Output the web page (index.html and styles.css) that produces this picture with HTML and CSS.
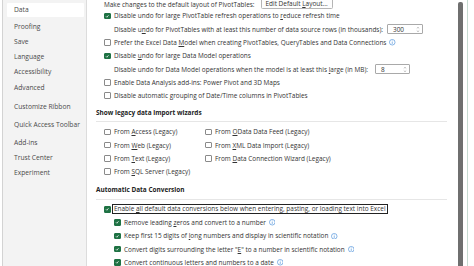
FILE: index.html
```html
<!DOCTYPE html>
<html>
<head>
<meta charset="utf-8">
<link rel="stylesheet" href="styles.css">
</head>
<body>
<div class="app">
  <div class="gutter"></div>
  <nav class="sidebar">
    <div class="nav-item selected">Data</div>
    <div class="nav-item">Proofing</div>
    <div class="nav-item">Save</div>
    <div class="nav-item">Language</div>
    <div class="nav-item">Accessibility</div>
    <div class="nav-item">Advanced</div>
    <div class="nav-item group-start">Customize Ribbon</div>
    <div class="nav-item tall">Quick Access Toolbar</div>
    <div class="nav-item group-start2">Add-ins</div>
    <div class="nav-item">Trust Center</div>
    <div class="nav-item">Experiment</div>
  </nav>
  <main class="main">
    <div class="top-row">
      <span class="top-text">Make changes to the default layout of PivotTables:</span>
      <button class="btn"><span>Edit Default <u>L</u>ayout...</span></button>
    </div>
    <div class="row ind1">
      <span class="cb on"><svg viewBox="0 0 6 6"><path d="M1.3 3.1 L2.5 4.3 L4.7 1.7"/></svg></span>
      <span>Disable undo for large PivotTable refresh operations to <u>r</u>educe refresh time</span>
    </div>
    <div class="row ind2">
      <span>Disable u<u>n</u>do for PivotTables with at least this number of data source rows (in thousands):</span>
      <span class="num w36">300<svg class="spin" viewBox="0 0 5 8"><path d="M1 2.6 L2.5 1.2 L4 2.6 M1 5.4 L2.5 6.8 L4 5.4"/></svg></span>
    </div>
    <div class="row ind1">
      <span class="cb"></span>
      <span>Prefer the Excel Data <u>M</u>odel when creating PivotTables, QueryTables and Data Connections</span>
      <svg class="info" viewBox="0 0 7 7"><circle cx="3.5" cy="3.5" r="3"/><circle class="dot" cx="3.5" cy="2.1" r="0.45"/><path d="M3.5 3.1 V5.3"/></svg>
    </div>
    <div class="row ind1">
      <span class="cb on"><svg viewBox="0 0 6 6"><path d="M1.3 3.1 L2.5 4.3 L4.7 1.7"/></svg></span>
      <span>Disable <u>u</u>ndo for large Data Model operations</span>
    </div>
    <div class="row ind2">
      <span>Disable undo for Data Model operations when the model is at least this <u>l</u>arge (in MB):</span>
      <span class="num w35">8<svg class="spin" viewBox="0 0 5 8"><path d="M1 2.6 L2.5 1.2 L4 2.6 M1 5.4 L2.5 6.8 L4 5.4"/></svg></span>
    </div>
    <div class="row ind1">
      <span class="cb"></span>
      <span>Enable Data Analysis add-ins: Power Pivot and 3D Maps</span>
    </div>
    <div class="row ind1">
      <span class="cb"></span>
      <span>Disable automatic grouping of Date/Time columns in PivotTables</span>
    </div>

    <div class="section-title">Show legacy data import wizards</div>
    <div class="legacy">
      <div class="row"><span class="cb"></span><span>From <u>A</u>ccess (Legacy)</span></div>
      <div class="row"><span class="cb"></span><span>From <u>O</u>Data Data Feed (Legacy)</span></div>
      <div class="row"><span class="cb"></span><span>From <u>W</u>eb (Legacy)</span></div>
      <div class="row"><span class="cb"></span><span>From <u>X</u>ML Data Import (Legacy)</span></div>
      <div class="row"><span class="cb"></span><span>From <u>T</u>ext (Legacy)</span></div>
      <div class="row"><span class="cb"></span><span>From <u>D</u>ata Connection Wizard (Legacy)</span></div>
      <div class="row"><span class="cb"></span><span>From <u>S</u>QL Server (Legacy)</span></div>
    </div>

    <div class="section-title second">Automatic Data Conversion</div>
    <div class="row ind1">
      <span class="cb on"><svg viewBox="0 0 6 6"><path d="M1.3 3.1 L2.5 4.3 L4.7 1.7"/></svg></span>
      <span class="focus">Enable <u>a</u>ll default data conversions below when entering, pasting, or loading text into Excel</span>
    </div>
    <div class="row ind3">
      <span class="cb on"><svg viewBox="0 0 6 6"><path d="M1.3 3.1 L2.5 4.3 L4.7 1.7"/></svg></span>
      <span>Remove leading <u>z</u>eros and convert to a number</span>
      <svg class="info" viewBox="0 0 7 7"><circle cx="3.5" cy="3.5" r="3"/><circle class="dot" cx="3.5" cy="2.1" r="0.45"/><path d="M3.5 3.1 V5.3"/></svg>
    </div>
    <div class="row ind3">
      <span class="cb on"><svg viewBox="0 0 6 6"><path d="M1.3 3.1 L2.5 4.3 L4.7 1.7"/></svg></span>
      <span>Keep first 15 digits of <u>l</u>ong numbers and display in scientific notation</span>
      <svg class="info" viewBox="0 0 7 7"><circle cx="3.5" cy="3.5" r="3"/><circle class="dot" cx="3.5" cy="2.1" r="0.45"/><path d="M3.5 3.1 V5.3"/></svg>
    </div>
    <div class="row ind3">
      <span class="cb on"><svg viewBox="0 0 6 6"><path d="M1.3 3.1 L2.5 4.3 L4.7 1.7"/></svg></span>
      <span>Convert digits surrounding the letter "<u>E</u>" to a number in scientific notation</span>
      <svg class="info" viewBox="0 0 7 7"><circle cx="3.5" cy="3.5" r="3"/><circle class="dot" cx="3.5" cy="2.1" r="0.45"/><path d="M3.5 3.1 V5.3"/></svg>
    </div>
    <div class="row ind3">
      <span class="cb on"><svg viewBox="0 0 6 6"><path d="M1.3 3.1 L2.5 4.3 L4.7 1.7"/></svg></span>
      <span>Convert <u>c</u>ontinuous letters and numbers to a date</span>
      <svg class="info" viewBox="0 0 7 7"><circle cx="3.5" cy="3.5" r="3"/><circle class="dot" cx="3.5" cy="2.1" r="0.45"/><path d="M3.5 3.1 V5.3"/></svg>
    </div>
  </main>
  <div class="scroll-col"><div class="thumb"></div></div>
  <div class="frame-gap"></div>
  <div class="frame-line"></div>
  <div class="frame-rest"></div>
</div>
</body>
</html>
```
FILE: styles.css
```css
* { box-sizing: border-box; }
html, body { margin: 0; padding: 0; background: #fff; }
body {
  width: 474px;
  height: 266px;
  overflow: hidden;
  font-family: "Open Sans", "Noto Sans", sans-serif;
  font-size: 6.45px;
  color: #333;
}
u { text-decoration-thickness: 0.6px; text-underline-offset: 1px; }
.app { display: flex; height: 266px; overflow: hidden; }
.gutter { width: 2px; flex: none; }
.sidebar {
  width: 85px;
  flex: none;
  background: #f3f3f3;
  border-left: 1px solid #d3d3d3;
  border-right: 1px solid #dcdcdc;
  padding: 3px 2px 0 4px;
  color: #4a4a4a;
  font-size: 6.7px;
}
.nav-item {
  height: 15.3px;
  line-height: 15px;
  padding-left: 7px;
  white-space: nowrap;
}
.nav-item.selected { background: #fff; height: 14px; line-height: 14px; margin-bottom: 1.6px; border-radius: 1px; }
.nav-item.group-start { margin-top: 3.7px; }
.nav-item.tall { margin-top: 2.7px; }
.nav-item.group-start2 { margin-top: 2.7px; }

.main {
  flex: 1;
  min-width: 0;
  padding: 0 11px 0 9px;
  white-space: nowrap;
}
.top-row {
  height: 9.3px;
  display: flex;
  align-items: flex-end;
  padding-left: 8px;
  gap: 6px;
}
.top-text { align-self: center; line-height: 8px; }
.btn {
  font: inherit;
  color: #333;
  height: 12px;
  padding: 0 4px 1px;
  border: 1px solid #b5b5b5;
  border-radius: 1.5px;
  background: #fdfdfd;
  display: flex;
  align-items: flex-end;
}
.btn span { line-height: 7px; }
.row {
  height: 13.3px;
  display: flex;
  align-items: center;
}
.ind1 { padding-left: 8px; }
.ind2 { padding-left: 18px; }
.ind3 { padding-left: 18px; }
.cb {
  width: 6.5px;
  height: 6.5px;
  flex: none;
  border: 0.8px solid #8a8a8a;
  border-radius: 1px;
  background: #fff;
  margin-right: 3.5px;
  display: flex;
}
.cb.on { background: #1f7244; border-color: #1f7244; }
.cb svg { width: 100%; height: 100%; fill: none; stroke: #fff; stroke-width: 1; }
.num {
  display: flex;
  align-items: center;
  justify-content: space-between;
  height: 10.5px;
  margin-left: 4px;
  padding: 0 2px 0 5px;
  border: 0.8px solid #a9a9a9;
  border-radius: 1px;
}
.w36 { width: 36px; }
.w35 { width: 35px; margin-left: 7px; }
.spin { width: 4px; height: 7px; fill: none; stroke: #777; stroke-width: 0.6; }
.info { width: 6.5px; height: 6.5px; margin-left: 3px; fill: none; stroke: #2b7cd3; stroke-width: 0.6; }
.info .dot { fill: #2b7cd3; stroke: none; }
.section-title {
  font-weight: 700;
  color: #222;
  margin-top: 5px;
  border-bottom: 1px solid #e6e6e6;
  margin-bottom: 3.5px;
  height: 14.5px;
  line-height: 12px;
}
.section-title.second { margin-top: 4.5px; height: 17px; line-height: 14px; margin-bottom: 3px; }
.legacy {
  display: grid;
  grid-template-columns: 101px auto;
  padding-left: 8px;
}
.legacy .row { height: 13.2px; }
.focus { outline: 0.8px solid #222; outline-offset: 0; padding: 0 1px; margin-left: -1px; line-height: 8px; }
.scroll-col { width: 5px; flex: none; padding-top: 2px; }
.thumb { height: 100%; background: #6f6f6f; border-radius: 2px 2px 0 0; }
.frame-gap { width: 4px; flex: none; }
.frame-line { width: 1px; flex: none; background: #c7dbd2; }
.frame-rest { width: 6px; flex: none; }
```
